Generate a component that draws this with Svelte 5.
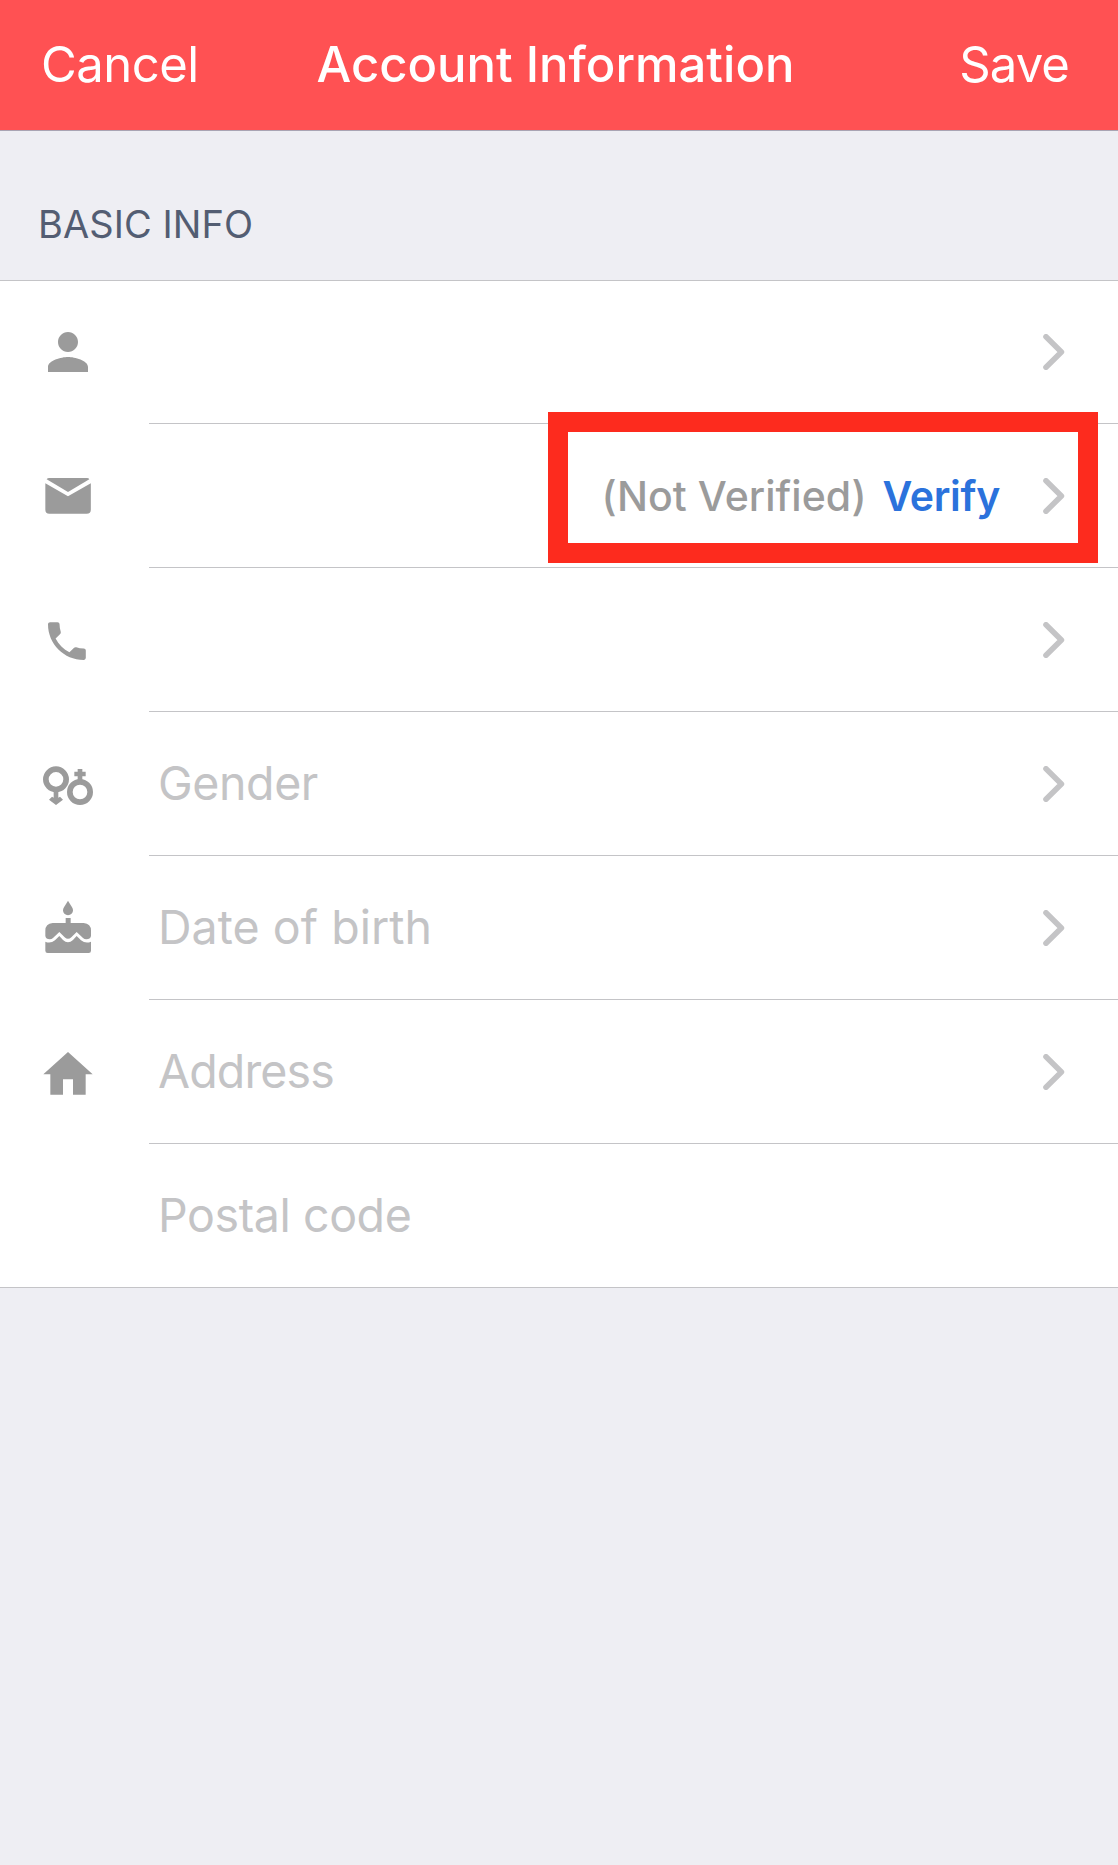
<script>
  const rows = [
    { id: 'name', icon: 'person', label: '', chevron: true },
    { id: 'email', icon: 'mail', label: '', chevron: true, unverified: true },
    { id: 'phone', icon: 'phone', label: '', chevron: true },
    { id: 'gender', icon: 'gender', label: 'Gender', chevron: true },
    { id: 'birth', icon: 'cake', label: 'Date of birth', chevron: true },
    { id: 'address', icon: 'home', label: 'Address', chevron: true },
    { id: 'postal', icon: '', label: 'Postal code', chevron: false }
  ];
</script>

<div class="screen">
  <header class="navbar">
    <span class="action cancel">Cancel</span>
    <h1>Account Information</h1>
    <span class="action save">Save</span>
  </header>

  <h2 class="section-title">BASIC INFO</h2>

  <ul class="list">
    {#each rows as row (row.id)}
      <li class="row {row.id}">
        <div class="icon">
          {#if row.icon === 'person'}
            <svg viewBox="0 0 24 24">
              <path d="M12 12c2.21 0 4-1.79 4-4s-1.79-4-4-4-4 1.79-4 4 1.79 4 4 4zm0 2c-2.67 0-8 1.34-8 4v2h16v-2c0-2.66-5.33-4-8-4z" />
            </svg>
          {:else if row.icon === 'mail'}
            <svg viewBox="54 465 180 180">
              <path d="M88 504H201Q206 504 208 508L144 546L80 508Q82 504 88 504Z" />
              <path d="M76 520L144 559L212.500 520V599Q212.500 611 200 611H88Q76 611 76 599Z" />
            </svg>
          {:else if row.icon === 'phone'}
            <svg viewBox="54 27 180 180">
              <path transform="translate(65.1 47.6) scale(6.3)" d="M6.620 10.790c1.440 2.830 3.760 5.140 6.590 6.590l2.200-2.200c.27-.27.67-.36 1.020-.24 1.120.37 2.330.57 3.570.57.55 0 1 .45 1 1V20c0 .55-.45 1-1 1-9.390 0-17-7.610-17-17 0-.55.45-1 1-1h3.500c.55 0 1 .45 1 1 0 1.250.2 2.450.57 3.570.11.35.03.74-.25 1.020l-2.200 2.200z" />
            </svg>
          {:else if row.icon === 'gender'}
            <svg viewBox="54 459 180 180">
              <circle class="ring" cx="108" cy="538" r="30.500" />
              <circle class="ring" cx="180" cy="576" r="30.500" />
              <path d="M101 572H115V593L120 590L129 599L108 615L87 599L96 590L101 593Z" />
              <path d="M173 542V529H163V515H173V507H187V515H197V529H187V542Z" />
            </svg>
          {:else if row.icon === 'cake'}
            <svg viewBox="54 51 180 180">
              <path d="M144 62L156 82Q159 87 159 91A15 15 0 0 1 129 91Q129 87 132 82Z" />
              <path d="M137 114H152V129H191Q213 131 213 152V168Q211 178 199 178Q193 178 189 174L170 156L154 172Q144 181 134 172L118 156L99 174Q95 178 89 178Q78 178 76 168V152Q76 131 98 129H137Z" />
              <path d="M76 185Q91 192 105 181L118 168L129 180Q144 194 159 180L170 168L183 181Q197 192 213 185V212Q213 219 206 219H83Q76 219 76 212Z" />
            </svg>
          {:else if row.icon === 'home'}
            <svg viewBox="54 483 180 180">
              <path d="M144 516L218 583H197V644H159V598H129V644H91V583H70Z" />
            </svg>
          {/if}
        </div>
        <div class="content">
          <span class="label">{row.label}</span>
          {#if row.unverified}
            <span class="status">(Not Verified)</span>
            <span class="verify">Verify</span>
            <span class="highlight"></span>
          {/if}
          {#if row.chevron}
            <svg class="chevron" viewBox="0 0 22 36">
              <path d="M3 2.800L18.400 18L3 33.200" />
            </svg>
          {/if}
        </div>
      </li>
    {/each}
  </ul>
</div>

<style>
  :global(body) {
    background: #eeeef3;
  }
  .screen {
    min-height: 1865px;
    background: #eeeef3;
    font-family: Inter, 'Liberation Sans', sans-serif;
  }
  .navbar {
    box-sizing: border-box;
    height: 131px;
    padding: 0 49px 0 41px;
    display: grid;
    grid-template-columns: 1fr auto 1fr;
    align-items: center;
    background: #ff5153;
    border-bottom: 1px solid #a9a4b3;
    color: #fff;
    font-size: 49px;
    line-height: 60px;
  }
  h1 {
    margin: 0;
    font-size: inherit;
    font-weight: 500;
    padding-left: 1px;
  }
  .action {
    letter-spacing: -0.52px;
  }
  .save {
    justify-self: end;
    letter-spacing: -0.9px;
  }
  .section-title {
    box-sizing: border-box;
    height: 149px;
    margin: 0;
    padding: 69px 38px 0;
    color: #535d72;
    font-size: 38px;
    font-weight: 400;
    line-height: 48px;
    letter-spacing: 0.06px;
  }
  .list {
    margin: 0;
    padding: 0;
    list-style: none;
    background: #fff;
    border-top: 1px solid #c4c4c7;
    border-bottom: 1px solid #c4c4c7;
  }
  .row {
    display: grid;
    grid-template-columns: 149px 1fr;
    height: 144px;
  }
  .row:first-child,
  .row:last-child {
    height: 143px;
  }
  .icon {
    display: flex;
    align-items: center;
    padding: 0 0 2px 38px;
  }
  .row:first-child .icon {
    padding-bottom: 1px;
  }
  .icon svg {
    width: 60px;
    height: 60px;
    fill: #9b9b9b;
  }
  .ring {
    fill: none;
    stroke: #9b9b9b;
    stroke-width: 17;
  }
  .content {
    position: relative;
    display: flex;
    align-items: center;
    padding: 0 53px 0 9px;
    border-bottom: 1px solid #c4c4c7;
  }
  .row:last-child .content {
    border-bottom: 0;
  }
  .label {
    flex: 1;
    padding-bottom: 2px;
    color: #c4c4c6;
    font-size: 46.5px;
    line-height: 56px;
    letter-spacing: -0.4px;
  }
  .birth .label {
    letter-spacing: 0.05px;
  }
  .address .label {
    letter-spacing: -0.85px;
  }
  .status,
  .verify {
    font-size: 41px;
    line-height: 50px;
  }
  .status {
    color: #9b9b9b;
    font-weight: 500;
    letter-spacing: 0.04px;
    margin-right: 16px;
  }
  .verify {
    color: #2b72dc;
    font-weight: 600;
    letter-spacing: -0.3px;
  }
  .chevron {
    width: 22px;
    height: 36px;
    margin-left: 43px;
  }
  .chevron path {
    fill: none;
    stroke: #c4c4c6;
    stroke-width: 5.6;
    stroke-linecap: round;
    stroke-linejoin: round;
  }
  .highlight {
    position: absolute;
    box-sizing: border-box;
    left: 399px;
    top: -12px;
    width: 550px;
    height: 151px;
    border: 20px solid #fd2b1e;
  }
</style>
